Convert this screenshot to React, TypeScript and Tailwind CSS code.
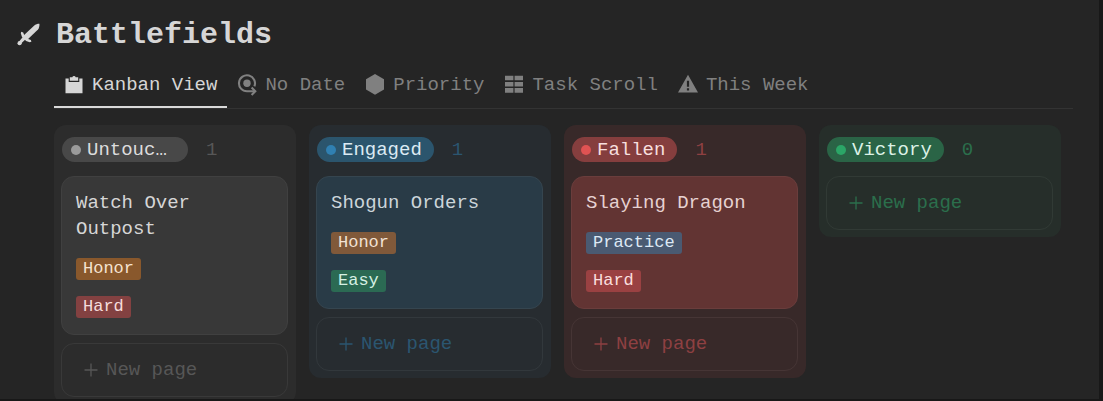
import { useState } from 'react';
import type { ReactNode } from 'react';

type Tag = { label: string; className: string };

type Column = {
  name: string;
  count: number;
  column: string;
  pill: string;
  dot: string;
  accent: string;
  card: string;
  outline: string;
  task?: { title: string; tags: Tag[] };
};

const columns: Column[] = [
  {
    name: 'Untouc…',
    count: 1,
    column: 'bg-[#2c2c2c]',
    pill: 'bg-[#484848] text-[#dcdcdc]',
    dot: 'bg-[#9b9b9b]',
    accent: 'text-[#575757]',
    card: 'bg-[#383838] border-[#404040] text-[#d6d6d6]',
    outline: 'border-[#393939]',
    task: {
      title: 'Watch Over Outpost',
      tags: [
        { label: 'Honor', className: 'bg-[#89582c] text-[#f6e3d0]' },
        { label: 'Hard', className: 'bg-[#834141] text-[#f6dcdc]' },
      ],
    },
  },
  {
    name: 'Engaged',
    count: 1,
    column: 'bg-[#272c30]',
    pill: 'bg-[#2b556d] text-[#dbeaf3]',
    dot: 'bg-[#3080b2]',
    accent: 'text-[#2b5670]',
    card: 'bg-[#293b47] border-[#35454f] text-[#ccd5da]',
    outline: 'border-[#32383c]',
    task: {
      title: 'Shogun Orders',
      tags: [
        { label: 'Honor', className: 'bg-[#80593a] text-[#f2e2d4]' },
        { label: 'Easy', className: 'bg-[#2b6a53] text-[#d5f1e4]' },
      ],
    },
  },
  {
    name: 'Fallen',
    count: 1,
    column: 'bg-[#382929]',
    pill: 'bg-[#853e3e] text-[#f7dfdf]',
    dot: 'bg-[#e05353]',
    accent: 'text-[#8e4042]',
    card: 'bg-[#623433] border-[#6a3d3c] text-[#e6d1d1]',
    outline: 'border-[#463535]',
    task: {
      title: 'Slaying Dragon',
      tags: [
        { label: 'Practice', className: 'bg-[#4a5a72] text-[#dce8f5]' },
        { label: 'Hard', className: 'bg-[#9a4142] text-[#fadede]' },
      ],
    },
  },
  {
    name: 'Victory',
    count: 0,
    column: 'bg-[#262e2a]',
    pill: 'bg-[#2a6446] text-[#dcf2e6]',
    dot: 'bg-[#2ba667]',
    accent: 'text-[#2b6f4c]',
    card: '',
    outline: 'border-[#313a35]',
  },
];

function Icon({ children }: { children: ReactNode }) {
  return (
    <svg width="20" height="22" viewBox="0 0 20 22" fill="currentColor" className="shrink-0" aria-hidden="true">
      {children}
    </svg>
  );
}

const tabs = [
  {
    label: 'Kanban View',
    icon: (
      <Icon>
        <path d="M1.5 4.6h3.2V8h10.6V4.6h3.2v14.6h-17z" />
        <path d="M5.8 3.2h2.5a1.8 1.8 0 0 1 3.4 0h2.5v3.6H5.8z" />
      </Icon>
    ),
  },
  {
    label: 'No Date',
    icon: (
      <Icon>
        <circle cx="10" cy="9.3" r="3.7" />
        <g fill="none" stroke="currentColor" strokeWidth="2.1">
          <path d="M17.4 12.3A8 8 0 1 0 10 17.3h8" />
          <path d="m14.6 13.6 3.7 3.7-3.7 3.7" />
        </g>
      </Icon>
    ),
  },
  {
    label: 'Priority',
    icon: (
      <Icon>
        <path d="M10 0 19 5.2v10.3l-9 5.2-9-5.2V5.2z" />
      </Icon>
    ),
  },
  {
    label: 'Task Scroll',
    icon: (
      <Icon>
        <path d="M1 1.7h8.4v4.6H1zM10.6 1.7H19v4.6h-8.4zM1 7.9h8.4v4.6H1zM10.6 7.9H19v4.6h-8.4zM1 14.1h8.4v4.6H1zM10.6 14.1H19v4.6h-8.4z" />
      </Icon>
    ),
  },
  {
    label: 'This Week',
    icon: (
      <Icon>
        <path fillRule="evenodd" d="M10 .8 20 18.6H0zM8.9 6.8v6h2.2v-6zM8.9 14.2v2.2h2.2v-2.2z" />
      </Icon>
    ),
  },
];

function SwordIcon() {
  return (
    <svg width="24" height="24" viewBox="0 0 24 24" fill="currentColor" className="shrink-0" aria-hidden="true">
      <path d="M23.4.8c.2 2.2-.2 4-1.4 5.8L11.6 16.6l-4-4L18 2.7C19.700 1.400 21.400.8 23.400.8z" />
      <path d="m5.300 8.700 1.900.7 1 2.600 4 4 2.700 1.100.5 1.700-1.700.4-3.600-1.300-4.200-4.200-1.100-3.400z" />
      <path d="m7 13.700 2.600 2.600-4.500 4.200-2-2z" />
      <circle cx="3.600" cy="20.200" r="2.100" />
    </svg>
  );
}

function NewPageButton({ className }: { className: string }) {
  return (
    <button type="button" className={`flex h-[54px] w-full items-center gap-2 rounded-[13px] border pl-5.5 text-left ${className}`}>
      <svg width="14" height="14" viewBox="0 0 14 14" fill="none" stroke="currentColor" strokeWidth="1.3" aria-hidden="true">
        <path d="M7 .5v13M.5 7h13" />
      </svg>
      New page
    </button>
  );
}

function BoardColumn({ data }: { data: Column }) {
  return (
    <section className={`rounded-xl pt-3 pr-2 pb-[7px] pl-[7px] ${data.column}`}>
      <header className="flex h-[25px] items-center gap-[18px] pl-px">
        <h2 className={`flex h-[25px] items-center gap-1.5 rounded-full pr-3 pl-[9px] ${data.pill}`}>
          <span className={`size-2.5 shrink-0 rounded-full ${data.dot}`} />
          <span className={data.name.endsWith('…') ? 'w-[89px]' : ''}>{data.name}</span>
        </h2>
        <span className={data.accent}>{data.count}</span>
      </header>

      <div className="mt-3.5 flex flex-col gap-2">
        {data.task && (
          <article className={`flex flex-col items-start gap-4 rounded-[13px] border px-3.5 pt-[13px] pb-4 ${data.card}`}>
            <h3 className="max-w-[180px]">{data.task.title}</h3>
            {data.task.tags.map(tag => (
              <span key={tag.label} className={`rounded-[3px] px-[7px] text-[17px] leading-[22px] ${tag.className}`}>
                {tag.label}
              </span>
            ))}
          </article>
        )}
        <NewPageButton className={`${data.accent} ${data.outline}`} />
      </div>
    </section>
  );
}

export default function App() {
  const [activeTab, setActiveTab] = useState('Kanban View');

  return (
    <main className="h-screen overflow-hidden border-r-4 border-b-2 border-[#181818] bg-[#252525] font-['Liberation_Mono',monospace] text-[19px] leading-[26px]">
      <div className="flex items-center gap-4 pt-[15px] pl-4 text-[#d6d6d6]">
        <SwordIcon />
        <h1 className="text-[30px] leading-10 font-bold">Battlefields</h1>
      </div>

      <nav className="mt-2 mr-[26px] ml-[54px] flex border-b border-[#333333]" role="tablist" aria-label="Views">
        {tabs.map(tab => (
          <button
            key={tab.label}
            type="button"
            role="tab"
            aria-selected={activeTab === tab.label}
            onClick={() => setActiveTab(tab.label)}
            className={`flex h-[45px] items-center gap-2 border-b-2 px-2.5 whitespace-nowrap ${
              activeTab === tab.label ? 'border-[#dadada] text-[#d6d6d6]' : 'border-transparent text-[#808080]'
            }`}
          >
            {tab.icon}
            {tab.label}
          </button>
        ))}
      </nav>

      <div className="mt-4 mr-[38px] ml-[54px] grid grid-cols-4 items-start gap-[13px]">
        {columns.map(column => (
          <BoardColumn key={column.name} data={column} />
        ))}
      </div>
    </main>
  );
}
